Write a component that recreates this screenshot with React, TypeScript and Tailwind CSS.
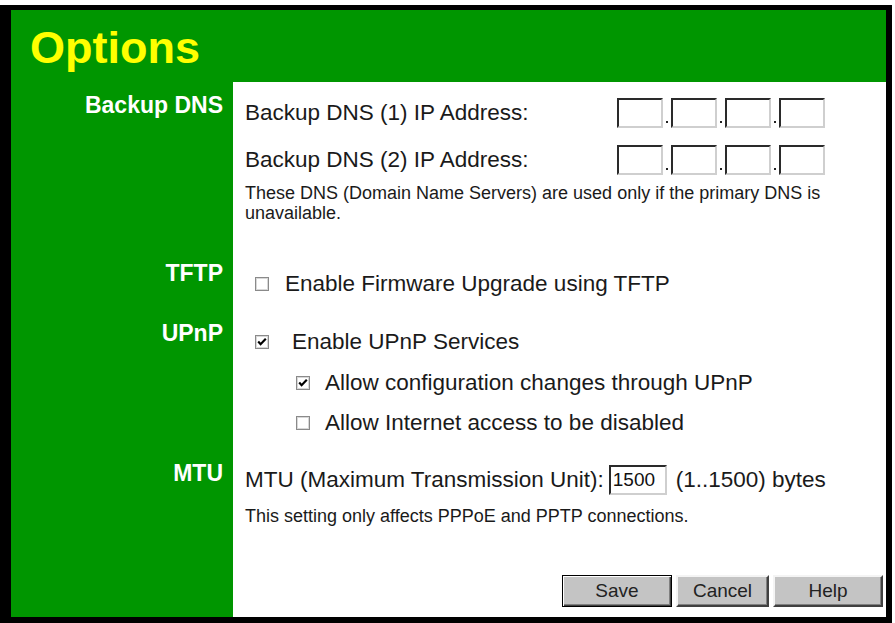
import React from "react";

function Check({ checked }: { checked?: boolean }) {
  return (
    <svg width="14" height="14" viewBox="0 0 14 14" className="shrink-0">
      <rect x="0.5" y="0.5" width="13" height="13" fill="#ffffff" stroke="#8a8a8a" />
      <rect x="1.5" y="1.5" width="11" height="11" fill="none" stroke="#d8d8d8" />
      {checked && (
        <path d="M3.2 6.6 L5.6 9.2 L10.8 3.8" fill="none" stroke="#000000" strokeWidth="2.2" />
      )}
    </svg>
  );
}

function IpBox() {
  return (
    <input
      readOnly
      className="w-[46px] h-[30px] bg-white border-t-2 border-l-2 border-r-2 border-b-2 border-t-[#2a2a2a] border-l-[#2a2a2a] border-r-[#cfcfcf] border-b-[#cfcfcf] outline-none"
    />
  );
}

function Dot() {
  return (
    <div className="w-[8px] h-[30px] flex items-end justify-center pb-[5px]">
      <div className="w-[2px] h-[2px] bg-[#222]" />
    </div>
  );
}

function IpRow({ label }: { label: string }) {
  return (
    <div className="flex items-center h-[30px]">
      <div className="w-[372px] text-[22.5px] leading-[30px]">{label}</div>
      <IpBox />
      <Dot />
      <IpBox />
      <Dot />
      <IpBox />
      <Dot />
      <IpBox />
    </div>
  );
}

function Label({ children }: { children: React.ReactNode }) {
  return (
    <div className="bg-[#009600] text-right pr-[10px] pt-[12px] text-white font-bold text-[23px] leading-[23px]">
      {children}
    </div>
  );
}

export default function App() {
  return (
    <div className="min-h-[623px] bg-white pt-[5px] text-[#1a1a1a] font-['Liberation_Sans',Arial,sans-serif]">
      <div className="w-[892px] h-[618px] border-black border-l-[11px] border-t-[5px] border-r-[6px] border-b-[6px] flex flex-col">
        <div className="h-[72px] shrink-0 bg-[#009600] pl-[19px] pt-[15px] text-[45px] leading-[45px] font-bold text-[#ffff00]">
          Options
        </div>
        <div className="grid grid-cols-[222px_1fr] flex-1">
          {/* Backup DNS */}
          <Label>Backup DNS</Label>
          <div className="bg-white pl-[12px] pt-[16px] pb-[27px]">
            <IpRow label="Backup DNS (1) IP Address:" />
            <div className="mt-[17px]">
              <IpRow label="Backup DNS (2) IP Address:" />
            </div>
            <div className="mt-[8px] text-[18px] leading-[20px]">
              These DNS (Domain Name Servers) are used only if the primary DNS is
              <br />
              unavailable.
            </div>
          </div>

          {/* TFTP */}
          <Label>TFTP</Label>
          <div className="bg-white pl-[12px] pt-[19px] pb-[11px]">
            <div className="flex items-center h-[30px] pl-[10px]">
              <Check />
              <span className="ml-[16px] text-[22.5px] leading-[30px]">Enable Firmware Upgrade using TFTP</span>
            </div>
          </div>

          {/* UPnP */}
          <Label>UPnP</Label>
          <div className="bg-white pl-[12px] pt-[17px] pb-[12px]">
            <div className="flex items-center h-[30px] pl-[10px]">
              <Check checked />
              <span className="ml-[23px] text-[22.5px] leading-[30px]">Enable UPnP Services</span>
            </div>
            <div className="flex items-center h-[30px] pl-[51px] mt-[11px]">
              <Check checked />
              <span className="ml-[15px] text-[22.5px] leading-[30px]">Allow configuration changes through UPnP</span>
            </div>
            <div className="flex items-center h-[30px] pl-[51px] mt-[10px]">
              <Check />
              <span className="ml-[15px] text-[22.5px] leading-[30px]">Allow Internet access to be disabled</span>
            </div>
          </div>

          {/* MTU */}
          <Label>MTU</Label>
          <div className="bg-white pl-[12px] pt-[15px] pb-[10px] pr-[3px] flex flex-col">
            <div className="flex items-center h-[30px]">
              <span className="text-[22.5px] leading-[30px]">MTU (Maximum Transmission Unit):</span>
              <input
                readOnly
                defaultValue="1500"
                className="ml-[5px] w-[58px] h-[30px] pl-[2px] bg-white text-[19px] text-[#111] border-t-2 border-l-2 border-r-2 border-b-2 border-t-[#2a2a2a] border-l-[#2a2a2a] border-r-[#cfcfcf] border-b-[#cfcfcf] outline-none font-['Liberation_Sans',Arial,sans-serif]"
              />
              <span className="ml-[9px] text-[22.5px] leading-[30px]">(1..1500) bytes</span>
            </div>
            <div className="mt-[11px] text-[18px] leading-[20px]">
              This setting only affects PPPoE and PPTP connections.
            </div>
            <div className="mt-[49px] flex justify-end gap-[4px]">
              <button className="w-[110px] h-[32px] bg-[#c4c4c4] border border-black shadow-[inset_1px_1px_0_#ffffff,inset_-1px_-1px_0_#404040,inset_-2px_-2px_0_#808080] text-[19px] text-[#222]">
                Save
              </button>
              <button className="w-[93px] h-[32px] bg-[#c4c4c4] border-2 border-t-[#f4f4f4] border-l-[#f4f4f4] border-r-[#404040] border-b-[#404040] shadow-[inset_-1px_-1px_0_#808080] text-[19px] text-[#222]">
                Cancel
              </button>
              <button className="w-[110px] h-[32px] bg-[#c4c4c4] border-2 border-t-[#f4f4f4] border-l-[#f4f4f4] border-r-[#404040] border-b-[#404040] shadow-[inset_-1px_-1px_0_#808080] text-[19px] text-[#222]">
                Help
              </button>
            </div>
          </div>
        </div>
      </div>
    </div>
  );
}
